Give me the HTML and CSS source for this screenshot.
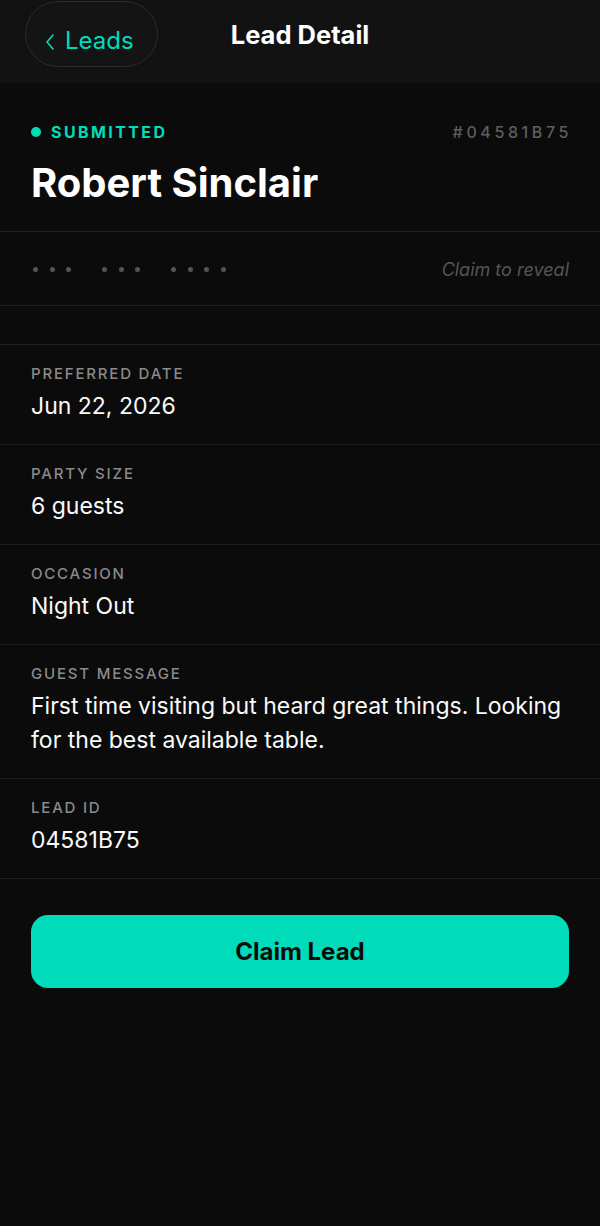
FILE: index.html
```html
<!DOCTYPE html>
<html lang="en">
	<head>
		<meta charset="UTF-8" />
		<meta name="viewport" content="width=device-width, initial-scale=1.0" />
		<title>Lead Detail</title>

		<link rel="stylesheet" href="styles.css">
	</head>
	<body>
		<header class="topBar">
			<a class="backBtn" href="#">
				<svg class="chevron" width="10" height="18" viewBox="0 0 10 18">
					<path d="M8 2 L2 9 L8 16" fill="none" stroke="currentColor" stroke-width="1.6" stroke-linecap="round" stroke-linejoin="round" />
				</svg>
				<span>Leads</span>
			</a>
			<h1>Lead Detail</h1>
		</header>

		<main>
			<section class="summary">
				<div class="statusRow">
					<span class="status"><i class="dot"></i>SUBMITTED</span>
					<span class="code">#04581B75</span>
				</div>
				<h2 class="name">Robert Sinclair</h2>
			</section>

			<div class="hidden">
				<div class="dots">
					<span><i></i><i></i><i></i></span>
					<span><i></i><i></i><i></i></span>
					<span><i></i><i></i><i></i><i></i></span>
				</div>
				<em>Claim to reveal</em>
			</div>

			<div class="spacer"></div>

			<dl class="fields">
				<div class="field">
					<dt>PREFERRED DATE</dt>
					<dd>Jun 22, 2026</dd>
				</div>
				<div class="field">
					<dt>PARTY SIZE</dt>
					<dd>6 guests</dd>
				</div>
				<div class="field">
					<dt>OCCASION</dt>
					<dd>Night Out</dd>
				</div>
				<div class="field">
					<dt>GUEST MESSAGE</dt>
					<dd>First time visiting but heard great things. Looking for the best available table.</dd>
				</div>
				<div class="field">
					<dt>LEAD ID</dt>
					<dd>04581B75</dd>
				</div>
			</dl>

			<div class="actions">
				<button class="claimBtn" type="button">Claim Lead</button>
			</div>
		</main>
	</body>
</html>
```

FILE: styles.css
```css
* {
	padding: 0;
	margin: 0;
	box-sizing: border-box;
}

body {
	background-color: #0b0b0b;
	color: #fff;
	font-family: Inter, "Noto Sans", sans-serif;
	min-height: 1226px;
}

.topBar {
	height: 83px;
	background-color: #121212;
	display: grid;
	grid-template-columns: 1fr auto 1fr;
	align-items: start;
	padding: 1px 25px 0;
}
.backBtn {
	justify-self: start;
	display: flex;
	align-items: center;
	gap: 10px;
	height: 66px;
	width: 133px;
	padding: 13px 0 0 19px;
	border: 1px solid #2b2b2b;
	border-radius: 33px;
	background-color: #141414;
	color: #00dcb9;
	text-decoration: none;
	font-size: 24px;
}
.chevron {
	margin-top: 2px;
}
.topBar h1 {
	font-size: 25.5px;
	font-weight: 700;
	line-height: 68px;
}

.summary {
	padding: 38px 31px 25px;
	border-bottom: 1px solid #202020;
}
.statusRow {
	display: flex;
	justify-content: space-between;
	align-items: center;
	font-size: 16px;
	letter-spacing: 2.4px;
	line-height: 22px;
}
.status {
	display: flex;
	align-items: center;
	gap: 10px;
	color: #00dcb9;
	font-weight: 700;
}
.dot {
	width: 10px;
	height: 10px;
	border-radius: 50%;
	background-color: #00dcb9;
}
.code {
	color: #5e5e5e;
	font-weight: 500;
	letter-spacing: 3.6px;
	margin-right: -3px;
}
.name {
	margin-top: 17px;
	font-size: 40px;
	font-weight: 700;
	line-height: 46px;
}

.hidden {
	height: 74px;
	display: flex;
	justify-content: space-between;
	align-items: center;
	padding: 2px 31px 0 33px;
	border-bottom: 1px solid #202020;
}
.dots {
	display: flex;
	gap: 31px;
}
.dots span {
	display: flex;
	gap: 11.5px;
}
.dots i {
	width: 5px;
	height: 5px;
	border-radius: 50%;
	background-color: #555;
}
.hidden em {
	color: #555;
	font-size: 18px;
}

.spacer {
	height: 39px;
	border-bottom: 1px solid #202020;
}

.field {
	padding: 20px 31px 21px;
	border-bottom: 1px solid #1e1e1e;
}
.field dt {
	font-size: 15px;
	line-height: 18px;
	letter-spacing: 1.8px;
	color: #8a8a8a;
	font-weight: 500;
}
.field dd {
	margin-top: 6px;
	font-size: 23px;
	line-height: 34px;
	color: #fafafa;
}

.actions {
	padding: 36px 31px;
}
.claimBtn {
	width: 100%;
	height: 73px;
	border: none;
	border-radius: 17px;
	background-color: #00dcb9;
	color: #0a0a0a;
	font-family: Inter, "Noto Sans", sans-serif;
	font-size: 24px;
	font-weight: 700;
	cursor: pointer;
}
```
